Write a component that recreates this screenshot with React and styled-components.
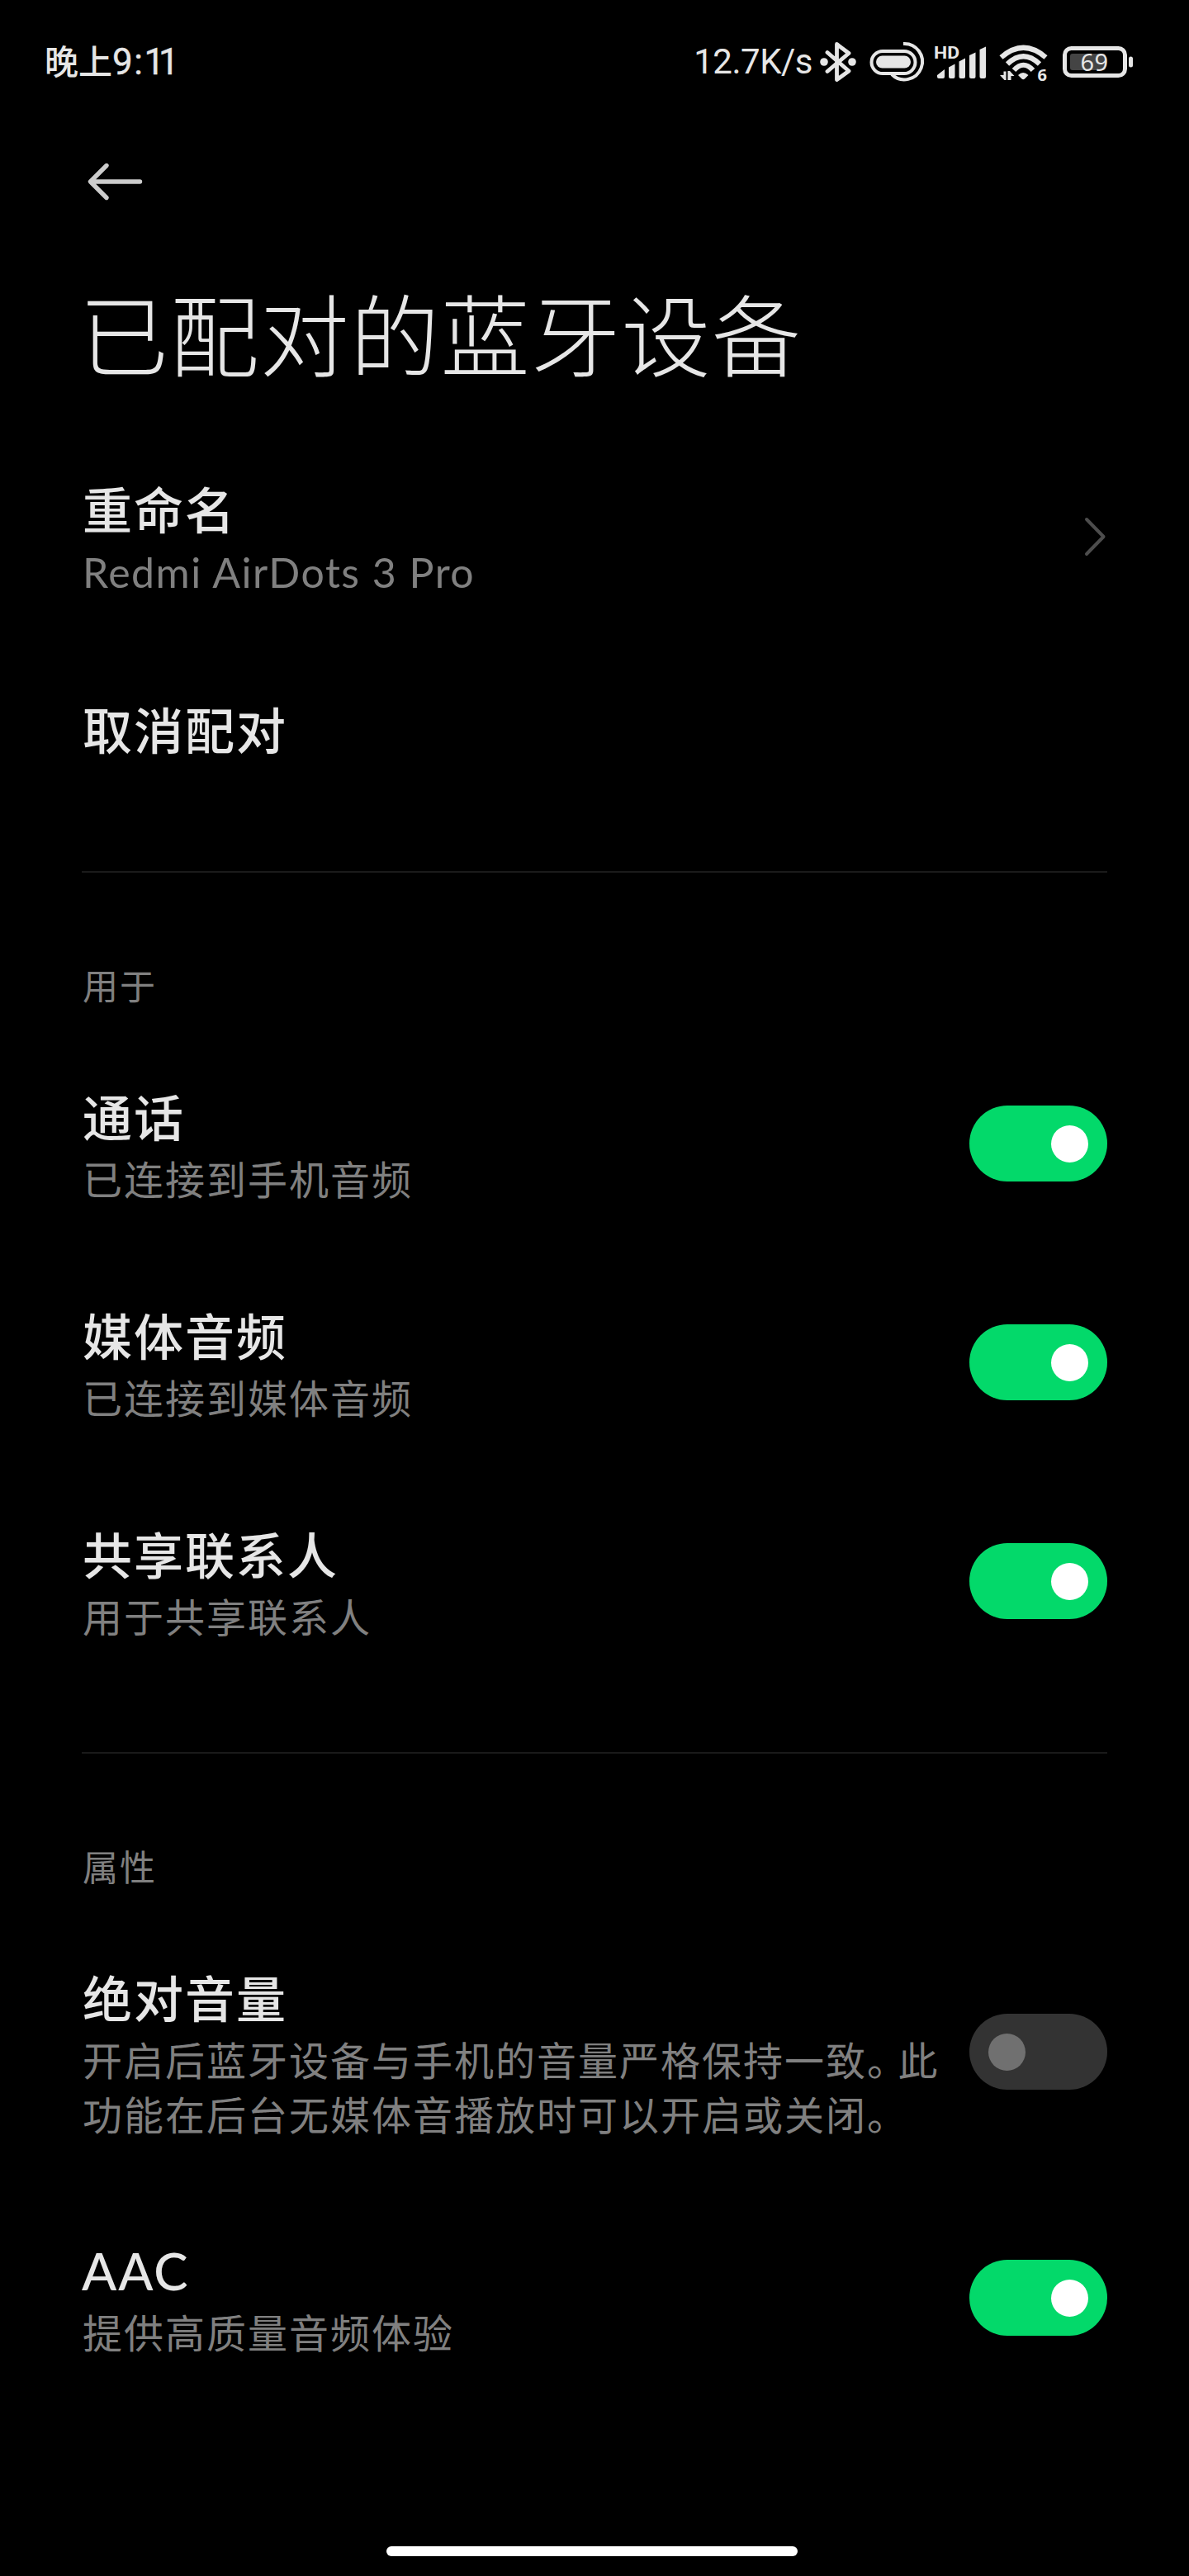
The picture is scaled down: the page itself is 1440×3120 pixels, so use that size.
import React from 'react';
import styled, { createGlobalStyle, css } from 'styled-components';

const GlobalStyle = createGlobalStyle`
  html, body { margin: 0; background: #000; }
  * { box-sizing: border-box; }
`;

const roboto = css`font-family: Roboto, 'Noto Sans CJK SC', sans-serif;`;
const lato = css`font-family: Lato, 'Noto Sans CJK SC', sans-serif;`;

const Screen = styled.div`
  width: 1440px;
  height: 3120px;
  display: flex;
  flex-direction: column;
  overflow: hidden;
  background: #000;
  color: #e6e6e6;
  ${lato}
`;

const StatusBar = styled.header`
  display: flex;
  align-items: center;
  height: 150px;
  padding: 0 66px 0 54px;
  flex: none;
`;

const Clock = styled.div`
  ${roboto}
  display: flex;
  align-items: baseline;
  flex: 1;
  font-size: 41px;
  font-weight: 500;
  line-height: 60px;
  white-space: nowrap;
`;

const Digits = styled.span`
  font-size: 44px;
  font-weight: 400;
  letter-spacing: ${(p) => p.$spacing}px;
  -webkit-text-stroke: 0.4px #e6e6e6;
`;

const Speed = styled.div`
  ${roboto}
  font-size: 42px;
  font-weight: 400;
  line-height: 60px;
  letter-spacing: -0.5px;
  white-space: nowrap;
`;

const StatusIcons = styled.svg`
  display: block;
  width: 384px;
  height: 60px;
  margin-left: 6px;
`;

const BackButton = styled.button`
  display: flex;
  align-items: center;
  height: 140px;
  padding: 0 0 0 104px;
  border: 0;
  background: none;
  flex: none;
`;

const Title = styled.h1`
  margin: 0;
  padding: 31px 0 0 96px;
  height: 227px;
  flex: none;
  font-family: 'Noto Sans CJK SC', sans-serif;
  font-size: 108px;
  line-height: 160px;
  font-weight: 300;
  letter-spacing: 1.4px;
  white-space: nowrap;
`;

const List = styled.section`
  display: flex;
  flex-direction: column;
  padding: 0 99px;
`;

const Row = styled.div`
  display: flex;
  align-items: center;
  justify-content: space-between;
  gap: 24px;
  min-height: ${(p) => p.$min || 265}px;
`;

const RowText = styled.div`
  flex: 1;
  padding: 5px 0 0 1px;
`;

const RowTitle = styled.div`
  font-size: 60px;
  line-height: 80px;
  font-weight: 500;
  letter-spacing: 2px;
  ${(p) => p.$latin && css`
    margin: -3px 0 3px -1px;
    font-size: 62px;
  `}
`;

const RowNote = styled.div`
  margin-top: 2px;
  color: #808080;
  font-size: ${(p) => (p.$latin ? 50 : 48)}px;
  line-height: 66px;
  letter-spacing: ${(p) => (p.$latin ? 1.5 : 2)}px;
`;

const NoteLine = styled.span`
  display: block;
  white-space: nowrap;
`;

const Stop = styled.span`
  letter-spacing: -10.5px;
`;

const Divider = styled.hr`
  width: 100%;
  height: 2px;
  margin: ${(p) => p.$top}px 0 1px;
  border: 0;
  background: #1a1a1a;
`;

const SectionLabel = styled.h2`
  margin: 0;
  padding: 104px 0 0 1px;
  height: 194.5px;
  color: #808080;
  font-size: 43px;
  line-height: 66px;
  font-weight: 400;
  letter-spacing: 2px;
`;

const Switch = styled.span`
  display: flex;
  align-items: center;
  justify-content: ${(p) => (p.$on ? 'flex-end' : 'flex-start')};
  flex: none;
  width: 167px;
  height: 92px;
  padding: 0 23px;
  border-radius: 46px;
  background: ${(p) => (p.$on ? '#03d96a' : '#333')};
`;

const Knob = styled.span`
  width: 45px;
  height: 45px;
  border-radius: 50%;
  background: ${(p) => (p.$on ? '#fff' : '#707070')};
`;

const HomeBar = styled.div`
  width: 498px;
  height: 12px;
  margin: auto 0 24px 468px;
  border-radius: 6px;
  background: #fff;
`;

function StatusGlyphs() {
  return (
    <StatusIcons viewBox="990 44 384 60" fill="#e6e6e6">
      <g fill="none" stroke="#e6e6e6" strokeWidth="4.8" strokeLinejoin="round" strokeLinecap="round">
        <path d="M1002 62.500 L1028 85 L1013.500 95.500 V52.500 L1028 63.500 L1002 85.500" />
      </g>
      <circle cx="998" cy="74" r="4.800" />
      <circle cx="1032" cy="74" r="4.800" />
      <g fill="none" stroke="#e6e6e6" strokeWidth="4">
        <rect x="1055.500" y="61" width="53" height="27" rx="13.500" />
        <path d="M1094 52 A21.700 21.700 0 1 1 1080 89" />
      </g>
      <rect x="1061" y="66.500" width="42" height="15" rx="7.500" />
      <text x="1131" y="69.500" fontFamily="Roboto, sans-serif" fontSize="21" fontWeight="700" textLength="31" lengthAdjust="spacingAndGlyphs">HD</text>
      <path d="M1135 94 V90 L1144 83 V92 Q1144 94 1142 94 H1137 Q1135 94 1135 92Z" />
      <path d="M1149 80.500 L1156.500 76.500 V92 Q1156.500 94 1154.500 94 H1151 Q1149 94 1149 92Z" />
      <path d="M1161.500 73.500 L1169 69.500 V92 Q1169 94 1167 94 H1163.500 Q1161.500 94 1161.500 92Z" />
      <path d="M1174 66 L1181.500 62.500 V92 Q1181.500 94 1179.500 94 H1176 Q1174 94 1174 92Z" />
      <path d="M1186.500 59 L1194 55.500 V92 Q1194 94 1192 94 H1188.500 Q1186.500 94 1186.500 92Z" />
      <g fill="none" stroke="#e6e6e6" strokeWidth="6.200">
        <path d="M1212.500 68.500 Q1239.500 45 1266.500 68.500" />
        <path d="M1220 76.500 Q1239.500 58 1259 76.500" />
        <path d="M1228 84 Q1239.500 71.500 1251 84" />
      </g>
      <path d="M1233 90 Q1239 84 1245.500 90 L1241 94.500 Q1239.300 96 1237.500 94.500Z" />
      <path d="M1211 90 L1215.500 90 V85.500 H1218.500 V96 H1216.500Z" />
      <path d="M1220.500 85 H1223 L1228.500 91 H1224.500 V96 H1220.500Z" />
      <text x="1256.500" y="97" fontFamily="'Noto Sans', sans-serif" fontSize="20" fontWeight="700">6</text>
      <rect x="1289.500" y="57.500" width="73" height="33" rx="8" fill="none" stroke="#e6e6e6" strokeWidth="5" />
      <rect x="1296" y="64" width="43" height="20" rx="3" fill="#444" />
      <text x="1308.500" y="84.800" fontFamily="'Noto Sans', sans-serif" fontSize="29" fontWeight="400" textLength="33.500">69</text>
      <rect x="1367" y="67.500" width="5" height="13" rx="2.500" />
    </StatusIcons>
  );
}

function Toggle({ on }) {
  return (
    <Switch $on={on} role="switch" aria-checked={on}>
      <Knob $on={on} />
    </Switch>
  );
}

function SwitchRow({ title, note, on = true, min, latin }) {
  return (
    <Row $min={min}>
      <RowText>
        <RowTitle $latin={latin}>{title}</RowTitle>
        <RowNote>{note}</RowNote>
      </RowText>
      <Toggle on={on} />
    </Row>
  );
}

const volumeNote = (
  <>
    <NoteLine>开启后蓝牙设备与手机的音量严格保持一致<Stop>。</Stop>此</NoteLine>
    <NoteLine>功能在后台无媒体音播放时可以开启或关闭。</NoteLine>
  </>
);

export default function App() {
  return (
    <Screen>
      <GlobalStyle />
      <StatusBar>
        <Clock>
          <span>晚上</span>
          <Digits $spacing={1.5}>9:</Digits>
          <Digits $spacing={-7}>11</Digits>
        </Clock>
        <Speed>12.7K/s</Speed>
        <StatusGlyphs />
      </StatusBar>
      <BackButton>
        <svg width="70" height="50" viewBox="0 0 70 50" fill="none" stroke="#cccccc" strokeWidth="5.400" strokeLinecap="round" strokeLinejoin="round">
          <path d="M65.500 25 H6 M25 5.500 L5.500 25 L25 44.500" />
        </svg>
      </BackButton>
      <Title>已配对的蓝牙设备</Title>
      <List>
        <Row>
          <RowText>
            <RowTitle>重命名</RowTitle>
            <RowNote $latin>Redmi AirDots 3 Pro</RowNote>
          </RowText>
          <svg width="30" height="50" viewBox="0 0 30 50" fill="none" stroke="#4d4d4d" strokeWidth="4" strokeLinecap="round" strokeLinejoin="round">
            <path d="M5 4 L25.500 25 L5 46" />
          </svg>
        </Row>
        <Row $min={200}>
          <RowText>
            <RowTitle>取消配对</RowTitle>
          </RowText>
        </Row>
        <Divider $top={73} />
        <SectionLabel>用于</SectionLabel>
        <SwitchRow title="通话" note="已连接到手机音频" />
        <SwitchRow title="媒体音频" note="已连接到媒体音频" />
        <SwitchRow title="共享联系人" note="用于共享联系人" />
        <Divider $top={74.5} />
        <SectionLabel>属性</SectionLabel>
        <SwitchRow title="绝对音量" note={volumeNote} on={false} min={331} />
        <SwitchRow title="AAC" note="提供高质量音频体验" latin />
      </List>
      <HomeBar />
    </Screen>
  );
}
